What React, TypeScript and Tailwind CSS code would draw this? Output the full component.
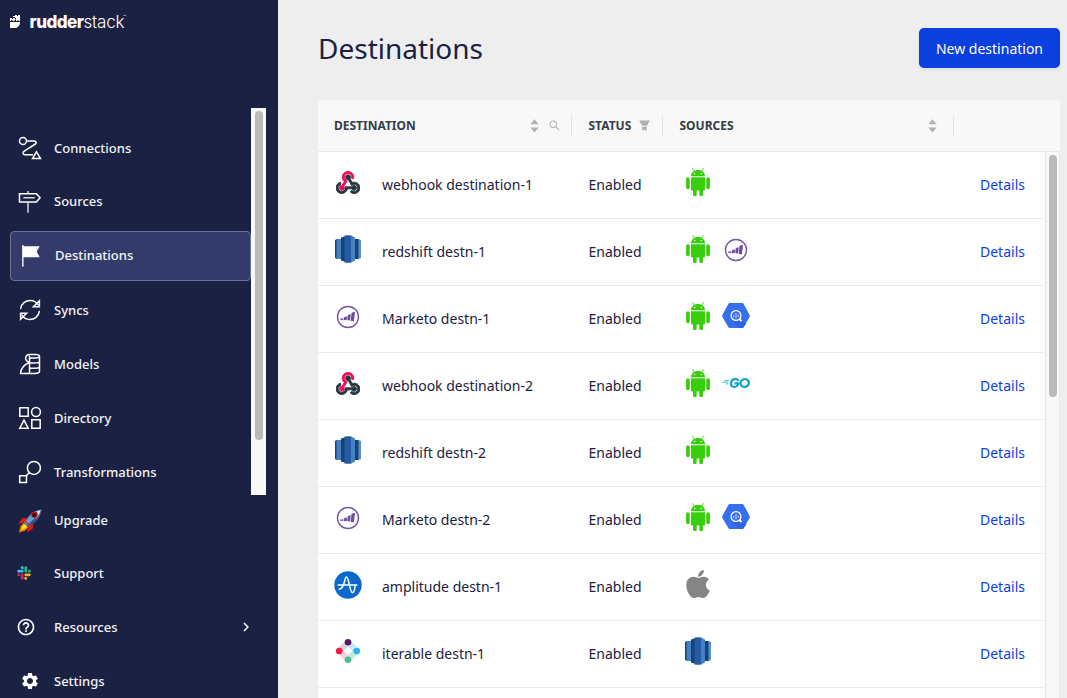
import type { ReactNode } from "react";
import { FaApple } from "react-icons/fa";
import { AiOutlineSearch } from "react-icons/ai";
import { MdHelpOutline, MdSettings } from "react-icons/md";

type IconName = "webhook" | "redshift" | "marketo" | "amplitude" | "iterable" | "android" | "bigquery" | "go" | "apple";

const Webhook = () => (
  <svg width="24" height="23" viewBox="0 0 256 239">
    <path fill="#f50a5c" d="M119.54 100.503c-10.61 17.836-20.775 35.108-31.152 52.25-2.665 4.401-3.984 7.986-1.855 13.58 5.878 15.454-2.414 30.493-17.998 34.575-14.697 3.851-29.016-5.808-31.932-21.543-2.584-13.927 8.224-27.58 23.58-29.757 1.286-.184 2.6-.205 4.762-.367l23.358-39.168C73.612 95.465 64.868 78.39 66.803 57.23c1.368-14.957 7.25-27.883 18-38.477 20.59-20.288 52.002-23.573 76.246-8.001 23.284 14.958 33.948 44.094 24.858 69.031-6.854-1.858-13.756-3.732-21.343-5.79 2.854-13.865.743-26.315-8.608-36.981-6.178-7.042-14.106-10.733-23.12-12.093-18.072-2.73-35.815 8.88-41.08 26.618-5.976 20.13 3.069 36.575 27.784 48.967z" stroke="#f50a5c" strokeWidth="10" />
    <g fill="#263640" stroke="#263640" strokeWidth="10">
      <path d="M149.841 79.41c7.475 13.187 15.065 26.573 22.587 39.836 38.02-11.763 66.686 9.284 76.97 31.817 12.422 27.219 3.93 59.457-20.465 76.25-25.04 17.238-56.707 14.293-78.892-7.851 5.654-4.733 11.336-9.487 17.407-14.566 21.912 14.192 41.077 13.524 55.305-3.282 12.133-14.337 11.87-35.714-.615-49.75-14.408-16.197-33.707-16.691-57.035-1.143-9.677-17.168-19.522-34.199-28.893-51.491-3.16-5.828-6.648-9.21-13.77-10.443-11.893-2.062-19.571-12.275-20.032-23.717-.453-11.316 6.214-21.545 16.634-25.53 10.322-3.949 22.435-.762 29.378 8.014 5.674 7.17 7.477 15.24 4.491 24.083-.83 2.466-1.905 4.852-3.07 7.774z" />
      <path d="M167.707 187.21h-45.77c-4.387 18.044-13.863 32.612-30.19 41.876-12.693 7.2-26.373 9.641-40.933 7.29-26.808-4.323-48.728-28.456-50.658-55.63-2.184-30.784 18.975-58.147 47.178-64.293 1.947 7.071 3.915 14.21 5.862 21.264-25.876 13.202-34.832 29.836-27.59 50.636 6.375 18.304 24.484 28.337 44.147 24.457 20.08-3.962 30.204-20.65 28.968-47.432 19.036 0 38.088-.197 57.126.097 7.434.117 13.173-.654 18.773-7.208 9.22-10.784 26.191-9.811 36.121.374 10.148 10.409 9.662 27.157-1.077 37.127-10.361 9.62-26.73 9.106-36.424-1.26-1.992-2.136-3.562-4.673-5.533-7.298z" />
    </g>
  </svg>
);

const Redshift = () => (
  <svg width="28" height="28" viewBox="0 0 28 28">
    <path fill="#17437a" d="M1 5 3 4v20l-2-1z" />
    <path fill="#4480c2" d="M2.5 4H7v20H2.5z" />
    <path fill="#17437a" d="M7 2.5 12 1v26l-5-1.5zM21 4h4v20h-4z" />
    <path fill="#255ba5" d="M10.5.6Q14-.2 17.5.6v26.8q-3.500.8-7 0z" />
    <path fill="#4480c2" d="M17 .6 21 2.500v23l-4 1.900z" />
    <path fill="#5b8fc9" d="m24.500 4 2.500 1v18l-2.500 1z" />
  </svg>
);

const Marketo = () => (
  <svg width="24" height="24" viewBox="0 0 24 24" className="mt-[2px]">
    <circle cx="12" cy="12" r="10.500" fill="none" stroke="#7656a4" strokeWidth="1.400" />
    <path fill="#6c4a9e" d="m15.600 7.800 3.500-1-1.300 9.800-3.100-.9zM11.800 10l3-.7-.8 6.300-2.700-.7zM8.200 12l2.900-.6-.5 3.800-2.700-.2zM4.300 13.500l3.200-.3-.3 1.800-2.900-.3z" />
  </svg>
);

const Android = () => (
  <svg width="24" height="28" viewBox="0 0 24 28" fill="#37cf0c">
    <path d="M5 8.200C5 4.700 8 2.100 12 2.100s7 2.600 7 6.100z" />
    <path d="m8.600 3.500-2-3M15.400 3.500l2-3" stroke="#37cf0c" strokeWidth=".9" strokeLinecap="round" />
    <circle cx="8.700" cy="5.500" r=".7" fill="#fff" /><circle cx="15.300" cy="5.500" r=".7" fill="#fff" />
    <path d="M5 9.200h14v12.200q0 1.100-1.100 1.100H17v3.900a1.800 1.800 0 0 1-3.700 0v-3.900h-2.600v3.900a1.800 1.800 0 0 1-3.700 0v-3.900h-.9Q5 22.500 5 21.400z" />
    <rect x=".1" y="9.200" width="3.700" height="12" rx="1.850" />
    <rect x="20.200" y="9.200" width="3.700" height="12" rx="1.850" />
  </svg>
);

const BigQuery = () => (
  <svg width="28" height="28" viewBox="0 0 28 28">
    <path fill="#366ef0" d="M7.800 1h12.400q1 0 1.500.9l5.900 11.200q.4.900 0 1.800l-5.900 10.200q-.5.900-1.500.9H7.800q-1 0-1.500-.9L.4 14.900q-.4-.9 0-1.800L6.300 1.900Q6.800 1 7.800 1z" />
    <path fill="#2f62dc" d="m18.200 17.300 6 4.200-2.500 3.600q-.5.900-1.500.9h-2.900l-7.200-7.200z" />
    <circle cx="14" cy="13.500" r="4.900" fill="none" stroke="#fff" strokeWidth="1.200" />
    <path d="m17.500 17 2.100 2.100" stroke="#fff" strokeWidth="1.900" />
    <path d="M11.800 13v2.200M14 11v5.500M16.200 12.800v2.200" stroke="#a9c3ff" strokeWidth="1.200" />
  </svg>
);

const Go = () => (
  <svg width="28" height="12" viewBox="0 0 28 12" fill="none" stroke="#16a3c9">
    <path d="M2.500 3.400h4.500M.1 5.100h6.200M4 6.900h2.200" strokeWidth=".8" />
    <path d="M16.600 3.900C15 .8 9.700 1.700 9 5.900c-.7 4.200 4.200 5.200 6.300 2.700.7-.8 1-1.500 1.100-2.200h-3.900" strokeWidth="2.200" />
    <ellipse cx="22.700" cy="6" rx="4.200" ry="3.900" strokeWidth="2.300" transform="rotate(-25 22.700 6)" />
  </svg>
);

const Amplitude = () => (
  <svg width="28" height="28" viewBox="0 0 28 28" className="mt-px">
    <circle cx="14" cy="14" r="13.700" fill="#0d69c9" />
    <path d="M4.200 14h18.600M5.300 18.200c3-.2 4.300-3.800 5.300-7.900.4-1.700.9-4.300 1.900-4.300 1.300 0 2.200 5 3.200 9.100.8 3.300 1.400 6.500 2.800 6.500 1.500 0 2.200-3.600 2.600-6.300" fill="none" stroke="#fff" strokeWidth="1.500" strokeLinecap="round" />
  </svg>
);

const Iterable = () => (
  <svg width="26" height="26" viewBox="0 0 26 26" fill="none" strokeWidth="6.200">
    <path d="m4.500 13 8.500-8.500" stroke="#dfcfe0" />
    <path d="m13 4.500 8.500 8.500" stroke="#c5eafa" />
    <path d="M21.500 13 13 21.500" stroke="#c5e9df" />
    <path d="M4.500 13l8.500 8.500" stroke="#fad0d9" />
    <circle cx="13" cy="4.200" r="3.300" fill="#5b1768" stroke="none" />
    <circle cx="4.200" cy="13" r="3.300" fill="#ef1941" stroke="none" />
    <circle cx="21.800" cy="13" r="3.300" fill="#2ab5ef" stroke="none" />
    <circle cx="13" cy="21.800" r="3.300" fill="#50b797" stroke="none" />
  </svg>
);

const icons: Record<IconName, ReactNode> = {
  webhook: <Webhook />,
  redshift: <Redshift />,
  marketo: <Marketo />,
  android: <Android />,
  bigquery: <BigQuery />,
  go: <Go />,
  amplitude: <Amplitude />,
  iterable: <Iterable />,
  apple: <FaApple className="h-[32px] w-[30px] shrink-0 text-[#858585]" />,
};

const Line = ({ children }: { children: ReactNode }) => (
  <svg width="24" height="24" viewBox="0 0 24 24" fill="none" stroke="#fff" strokeWidth="1.500" strokeLinejoin="round" strokeLinecap="round">
    {children}
  </svg>
);

const ConnectionsIcon = () => (
  <Line>
    <circle cx="5" cy="5" r="3.500" />
    <path d="M8.500 5h7.700c2 0 2.700 1.900 1.200 3L6.200 15.200c-2 1.500-1.300 3.600.8 3.600h7.500" />
    <path d="m18.500 15.800 4 6.700h-8z" strokeLinejoin="miter" />
  </Line>
);
const SourcesIcon = () => (
  <Line>
    <path d="M1.500 3.700h16.800l3.800 4.100-3.800 4.200H1.500z" strokeLinejoin="miter" />
    <path d="M5.300 7.800h11.400M10 1v2.700M10 12v10.700" strokeLinecap="butt" stroke="#d4d6df" />
  </Line>
);
const FlagIcon = () => (
  <svg width="24" height="24" viewBox="0 0 24 24">
    <path d="M2.800 1v21.700" stroke="#dfe1ee" strokeWidth="1.600" />
    <path d="M3 2.300h16.700l-3 5.300 3 5.600H3z" fill="#fff" />
  </svg>
);
const SyncsIcon = () => (
  <Line>
    <path d="M2.700 10.400C3.500 5.600 7.500 2.500 12.400 2.600c3.400.1 6.200 1.900 7.800 4.300M21.300 13.600c-.8 4.800-4.800 7.900-9.700 7.800-3.400-.1-6.200-1.900-7.800-4.300" />
    <path d="M21.400 2.800v5.900h-6zM2.600 21.200v-5.900h6z" strokeLinejoin="miter" />
  </Line>
);
const ModelsIcon = () => (
  <Line>
    <path d="M11.500 4.300v17.200H2.500c.4-4.700 3.600-9 9-11M11.500 10.100C6.500 9.500 6 2.600 12 2.500h5.500c2.500 0 4 .8 4 1.800s-1.600 1.700-4 1.800l-6-.3M21.500 4.300v15c0 1.400-2 2.200-5 2.200h-5M11.500 10.900h5c3 0 5-.5 5-1.500M11.500 16.300h5c3 0 5-.6 5-1.700" />
  </Line>
);
const DirectoryIcon = () => (
  <Line>
    <path d="M1.800 1.800h8.400v8.400H1.800zM13.800 13.800h8.400v8.400h-8.400zM6 14.200l4.200 8H1.800z" strokeLinejoin="miter" />
    <circle cx="18" cy="6" r="4.400" />
  </Line>
);
const TransformationsIcon = () => (
  <Line>
    <circle cx="15.900" cy="7.900" r="6.500" />
    <path d="M1.700 15.700h6.800v6.800H1.700zM8.500 15.500l2.800-2.800" strokeLinejoin="miter" />
  </Line>
);
const RocketIcon = () => (
  <svg width="24" height="24" viewBox="0 0 24 24" className="mt-[2px]">
    <path d="M9 8.500 4 9.500.5 14.800 7 13.300zM15.500 15l-1 5-5.700 3.500 1.600-6.500z" fill="#e9190d" />
    <path d="m5.500 14-3 3.200L1 23.400l6.300-1.800 2.900-3.200z" fill="#f08a00" />
    <path d="m6.500 15-2.400 3-.9 3 3.200-1.200 2.800-2.400z" fill="#ffe32d" />
    <path d="M23.500.6c-5 .5-9.700 2.800-12.900 7.200L6 13.900l4.400 4.300 6-4.800c4.300-3.500 6.600-7.700 7.100-12.800z" fill="#6b9fca" />
    <path d="M23.500.6c-3 4.700-7.300 9.700-14.500 16.200l1.400 1.400 6-4.800c4.300-3.500 6.600-7.700 7.100-12.800z" fill="#31567e" />
    <path d="M22.500 1.500c-3.500.6-6.300 1.900-8.500 4l4 4c2.300-2.200 3.900-5 4.500-8z" fill="#dce5ec" />
    <circle cx="16.500" cy="5.700" r="3.300" fill="#c61616" /><circle cx="16.200" cy="5.900" r="2" fill="#16161e" />
    <path d="m7 12 5 5" stroke="#c33126" strokeWidth="1.400" />
  </svg>
);
const SlackIcon = () => (
  <svg width="14" height="14" viewBox="0 0 14 14" className="-ml-px -mt-[2px]">
    <path fill="#36c5f0" d="M5.200.2a1.400 1.400 0 1 0 0 2.800h1.400V1.600A1.400 1.400 0 0 0 5.200.2zM1.600 3.800a1.400 1.400 0 1 0 0 2.800h3.600a1.400 1.400 0 1 0 0-2.800z" />
    <path fill="#2eb67d" d="M13.800 5.200a1.400 1.400 0 1 0-2.800 0v1.400h1.400a1.400 1.400 0 0 0 1.400-1.400zM10.200 1.600a1.400 1.400 0 1 0-2.800 0v3.600a1.400 1.400 0 1 0 2.800 0z" />
    <path fill="#ecb22e" d="M8.800 13.800a1.400 1.400 0 1 0 0-2.800H7.400v1.400c0 .8.600 1.400 1.400 1.400zM12.400 10.200a1.400 1.400 0 1 0 0-2.800H8.800a1.400 1.400 0 1 0 0 2.800z" />
    <path fill="#e01e5a" d="M.2 8.800a1.400 1.400 0 1 0 2.800 0V7.400H1.600C.8 7.400.2 8 .2 8.800zM3.800 12.400a1.400 1.400 0 1 0 2.800 0V8.800a1.400 1.400 0 1 0-2.800 0z" />
  </svg>
);

const mainNav = [
  { label: "Connections", icon: <ConnectionsIcon />, pad: "pt-[2px]" },
  { label: "Sources", icon: <SourcesIcon />, pad: "" },
  { label: "Destinations", icon: <FlagIcon />, pad: "", active: true },
  { label: "Syncs", icon: <SyncsIcon />, pad: "pt-[2px]" },
  { label: "Models", icon: <ModelsIcon />, pad: "pt-[2px]" },
  { label: "Directory", icon: <DirectoryIcon />, pad: "pt-[2px]" },
  { label: "Transformations", icon: <TransformationsIcon />, pad: "pt-[2px]" },
];

const footerNav = [
  { label: "Upgrade", icon: <RocketIcon />, pad: "pt-[2px]" },
  { label: "Support", icon: <SlackIcon />, pad: "" },
  { label: "Resources", icon: <MdHelpOutline className="-ml-[2px] size-5 text-white" />, pad: "", more: true },
  { label: "Settings", icon: <MdSettings className="ml-[2px] size-[20px] text-white" />, pad: "pt-[2px]" },
];

const rows: { icon: IconName; name: string; sources: IconName[] }[] = [
  { icon: "webhook", name: "webhook destination-1", sources: ["android"] },
  { icon: "redshift", name: "redshift destn-1", sources: ["android", "marketo"] },
  { icon: "marketo", name: "Marketo destn-1", sources: ["android", "bigquery"] },
  { icon: "webhook", name: "webhook destination-2", sources: ["android", "go"] },
  { icon: "redshift", name: "redshift destn-2", sources: ["android"] },
  { icon: "marketo", name: "Marketo destn-2", sources: ["android", "bigquery"] },
  { icon: "amplitude", name: "amplitude destn-1", sources: ["apple"] },
  { icon: "iterable", name: "iterable destn-1", sources: ["redshift"] },
];

const Sorter = () => (
  <svg width="9" height="14" viewBox="0 0 9 14" fill="#b0b0b0">
    <path d="M4.500.3 8.700 5.300H.3zM4.500 13.500 8.700 8.500H.3z" />
  </svg>
);

const Funnel = () => (
  <svg width="11" height="11" viewBox="0 0 11 11" fill="#b0b0b0" className="ml-2">
    <path d="M.2.500h10.600L8 5.800H3zM3.200 6.700h4.600v3.100q0 .5-.5.500H3.700q-.5 0-.5-.5z" />
  </svg>
);

function Sidebar() {
  return (
    <aside className="flex h-full w-[278px] shrink-0 flex-col bg-[#1b2142] text-[13px] font-medium text-[#f3f4f8]">
      <div className="flex h-[108px] shrink-0 items-start pl-[10px] pt-[10px]">
        <svg width="10" height="14" viewBox="0 0 10 14" className="mt-[4px]" fill="#fff">
          <path d="M0 8h10c0 3.500-2 6-5 6H0zM0 4h2v1h1V4h2v1.500h1V4H5V3H3V2h2V1h2v1h1V1h2v6H8.500V6h-1v1H6V6H4.500v1h-2V6H1v1H0z" />
        </svg>
        <div className="ml-[9.500px] flex items-start font-['Inter',sans-serif] text-[17px] leading-6 tracking-[-0.500px] text-white">
          <span className="font-extrabold">rudder</span>
          <span className="font-light tracking-[-0.200px]">stack</span>
          <span className="-ml-px text-[4px] leading-[14px] tracking-normal">™</span>
        </div>
      </div>
      <div className="flex h-[387px] shrink-0">
        <nav className="flex w-[251px] flex-col gap-1 overflow-hidden pl-[10px] pt-[15px]">
          {mainNav.map((item) => (
            <a
              key={item.label}
              className={
                item.active
                  ? "flex h-[50px] shrink-0 items-center gap-[11px] rounded-[4px] border border-[#6d7299] bg-[#343b6b] pl-[9px]"
                  : "flex h-[50px] shrink-0 items-center gap-3 pl-2"
              }
            >
              {item.icon}
              <span className={item.pad}>{item.label}</span>
            </a>
          ))}
        </nav>
        <div className="flex h-full w-[15px] justify-center bg-[#f8f8f8] pt-[3px]">
          <div className="h-[329px] w-2 rounded-full bg-[#bababa]" />
        </div>
      </div>
      <nav className="flex flex-col gap-[3.700px] overflow-hidden pl-[18px]">
        {footerNav.map((item) => (
          <a key={item.label} className="flex h-[50px] shrink-0 items-center">
            <span className="flex w-9 items-center">{item.icon}</span>
            <span className={item.pad}>{item.label}</span>
            {item.more && (
              <svg width="8" height="10" viewBox="0 0 8 10" fill="none" stroke="#fff" strokeWidth="1.500" className="ml-auto mr-[28px]">
                <path d="m2 1 3.900 4L2 9" />
              </svg>
            )}
          </a>
        ))}
      </nav>
    </aside>
  );
}

export default function App() {
  return (
    <div className="flex h-[698px] w-[1067px] overflow-hidden bg-[#eeeeee] font-['Noto_Sans',sans-serif]">
      <Sidebar />
      <main className="flex min-w-0 flex-1 flex-col pl-10 pr-[7px]">
        <header className="flex h-[100px] shrink-0 items-start justify-between pt-7">
          <h1 className="text-[28px] leading-10 text-[#1b2142]">Destinations</h1>
          <button className="h-10 w-[141px] rounded-[5px] bg-[#0b40df] pt-[2px] text-sm text-white shadow-[0_2px_4px_rgba(0,0,0,0.070)]">
            New destination
          </button>
        </header>
        <div className="flex h-[52px] shrink-0 items-center border-b border-[#e9e9e9] bg-[#f8f8f8] text-xs font-bold text-[#343c4a]">
          <div className="flex h-5 w-[254px] items-center border-r border-[#e2e2e2] pl-4 pr-[11px]">
            <span className="flex-1">DESTINATION</span>
            <Sorter />
            <AiOutlineSearch className="ml-[9px] -mr-px size-[13px] text-[#b0b0b0]" />
          </div>
          <div className="flex h-5 w-[91px] items-center border-r border-[#e2e2e2] pl-[16.500px]">
            <span>STATUS</span>
            <Funnel />
          </div>
          <div className="flex h-5 w-[291px] items-center justify-between border-r border-[#e2e2e2] pl-[16.500px] pr-[16px]">
            <span>SOURCES</span>
            <Sorter />
          </div>
        </div>
        <div className="flex min-h-0 flex-1">
          <div className="w-[727px] overflow-hidden bg-white text-sm text-[#1b2142]">
            {rows.map((row) => (
              <div key={row.name} className="flex h-[67px] items-center border-b border-[#ebebeb]">
                <div className="flex w-[270.500px] items-center gap-5 pl-4">
                  <span className="-mt-1.5 flex w-7 items-center justify-center">{icons[row.icon]}</span>
                  <span>{row.name}</span>
                </div>
                <div className="w-[95.500px]">Enabled</div>
                <div className="-mt-1.5 flex w-[278px] items-center gap-2.5">
                  {row.sources.map((source) => (
                    <span key={source} className="flex h-7 w-7 items-center justify-center">{icons[source]}</span>
                  ))}
                </div>
                <a className="ml-[18px] text-[#0b40df]">Details</a>
              </div>
            ))}
          </div>
          <div className="flex w-[15px] justify-center border-x border-[#e7e7e7] bg-[#f8f8f8] pt-[3px]">
            <div className="h-[242px] w-2 rounded-full bg-[#bababa]" />
          </div>
        </div>
      </main>
    </div>
  );
}
